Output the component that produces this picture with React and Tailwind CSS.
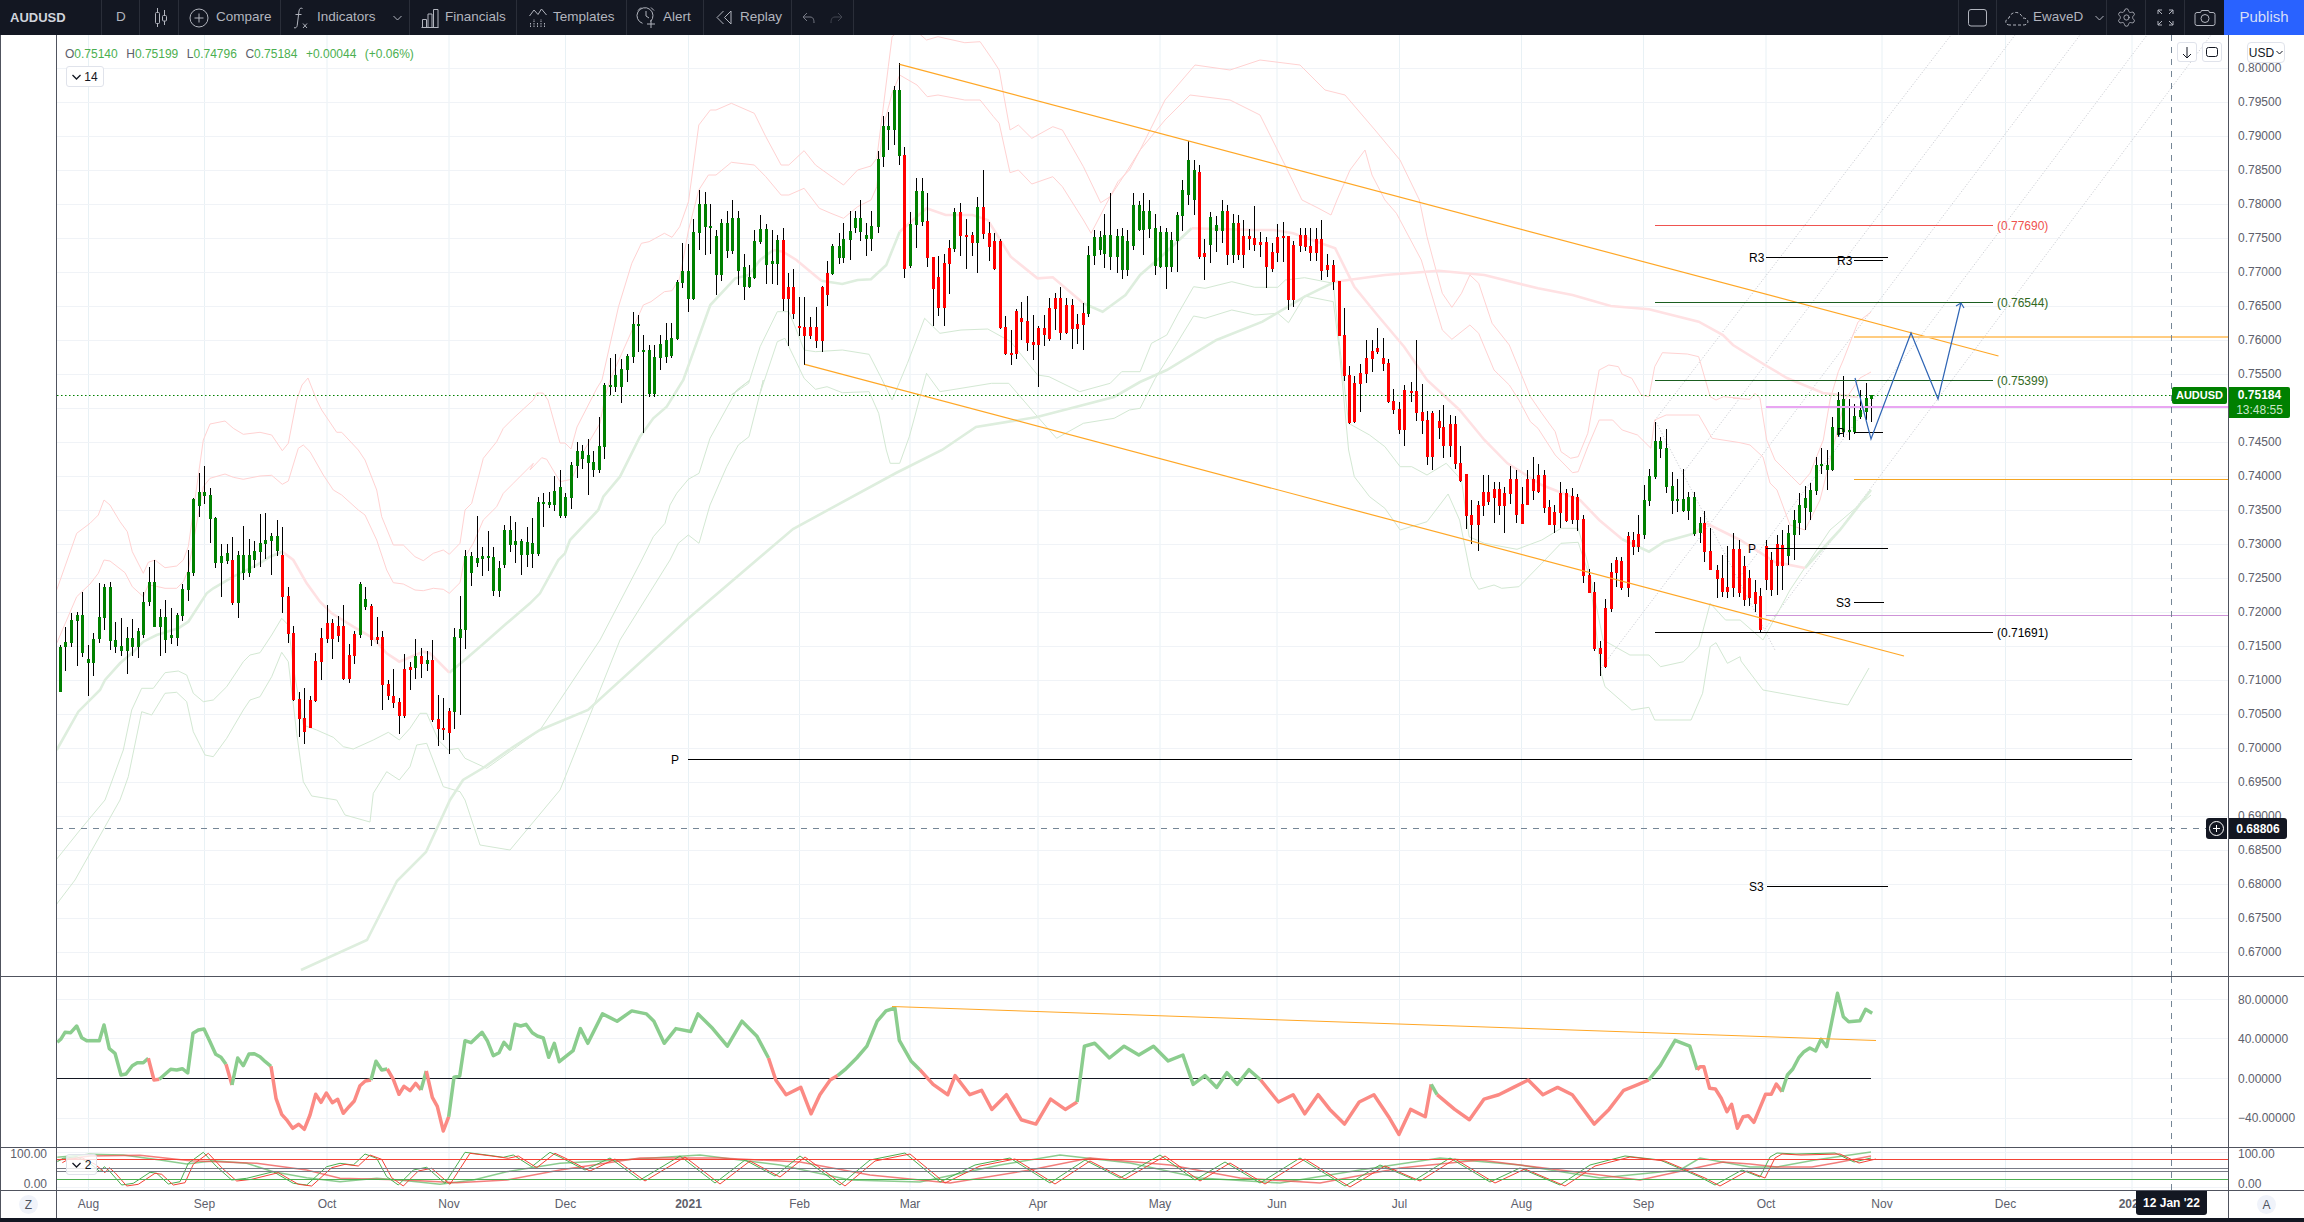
import { Settings } from 'lucide-react';

// chart data was read off the picture, every array is in the pixel space of one crop
const mapPts = (flat, x0 = 0, sx = 1, y0 = 0, sy = 1) => {
  const out = [];
  for (let i = 0; i < flat.length; i += 2) out.push([x0 + flat[i] / sx, y0 + flat[i + 1] / sy]);
  return out;
};
const zA = (f) => mapPts(f, 40, 3, 400, 3);
const zN = (f) => mapPts(f, 530, 3, 380, 3);
const zB = (f) => mapPts(f, 540, 2.613, 30, 3);
const zC = (f) => mapPts(f, 1140, 2.613, 200, 3);
const zD = (f) => mapPts(f, 1700, 3, 360, 3);
const ov = (f) => mapPts(f, 0, 1 / 1.4694, 0, 1 / 1.4694);
const toPath = (pts) => pts.map((p) => p[0].toFixed(1) + ',' + p[1].toFixed(1)).join(' ');

const candlesA = [
  [61,740,875,735,875],[76,727,740,682,812],[94,660,728,640,740],[112,645,662,637,798],[127,645,758,576,770],[145,778,790,735,887],[160,717,790,700,827],[178,652,718,549,730],[193,561,653,552,690],[211,561,722,547,750],
  [226,720,740,666,758],[244,738,752,654,768],[262,714,752,682,822],[277,714,742,657,768],[295,693,742,684,773],[310,607,705,576,714],[328,546,607,501,617],[343,546,680,480,680],[361,652,680,627,768],[376,652,719,600,758],
  [394,705,714,624,732],[412,645,713,640,737],[427,567,647,552,662],[445,516,570,450,602],[460,297,518,293,527],[478,277,317,219,350],[493,277,287,198,311],[511,285,356,264,429],[526,353,488,350,503],[544,468,488,432,591],
  [562,459,483,432,491],[577,480,608,411,614,1],[595,465,608,453,653],[610,465,518,378,539],[628,465,518,417,530],[643,453,480,423,503],[661,429,455,342,500],[676,420,432,339,476],[694,408,423,399,524],[712,408,452,360,467],
  [727,465,590,381,638,1],[745,588,701,561,728,1],[760,699,900,678,902,1],[778,897,956,876,1010,1],[793,954,995,864,1031,1],[811,900,983,888,983,1],[826,783,903,759,905,1],[844,714,785,684,839,1],[862,670,716,615,728,1],[877,670,716,657,776,1],
  [895,678,708,648,725,1],[910,678,836,615,839,1],[928,765,836,732,848,1],[943,702,767,693,791,1],[961,552,705,546,714],[976,597,620,561,629],[994,618,720,612,737,1],[1012,711,719,651,731,1],[1027,711,855,693,929,1],[1045,852,888,840,899,1],
  [1060,888,909,807,923,1],[1078,906,947,894,1001,1],[1093,807,947,762,953,1],[1111,801,809,786,869,1],[1126,768,803,717,836],[1144,768,791,744,833,1],[1162,780,791,753,812],[1177,780,960,720,965,1],[1195,958,986,885,1037,1],[1210,984,989,894,1019,1],
  [1228,933,998,924,1061,1],[1243,711,935,684,986],[1261,687,713,588,944],[1276,468,689,450,746],[1294,468,518,456,557],[1312,474,489,348,501],[1327,468,476,441,527],[1345,468,473,393,512],[1360,471,572,441,587],[1378,504,572,483,590],
  [1393,390,494,375,505],[1411,390,434,348,455],[1426,423,434,366,488],[1444,423,464,417,524],[1462,426,464,381,500],[1477,429,461,354,503],[1495,306,461,291,467],
];
const candlesN = [
  [40,366,369,338,441],[58,366,376,335,384],[73,333,375,288,392],[91,321,408,270,414],[106,351,408,339,414],[124,255,354,246,387],[142,213,258,186,294],[157,213,237,195,267],[175,225,249,177,345],[190,246,270,213,291],[208,198,270,111,279],[223,15,201,10,237],
];
const candlesB = [
  [183,1065,1071,985,1095],[197,1035,1071,972,1085],[212,1017,1071,987,1118],[228,978,1020,972,1056],[242,882,980,846,998],[257,882,888,855,965],[270,960,966,915,1210],[285,960,1092,945,1100],[298,981,1092,945,1100],[314,942,985,915,1020],
  [328,930,980,880,1000],[343,924,978,879,983],[358,756,928,751,931],[372,723,760,640,773],[387,723,807,642,845],[401,605,807,568,810],[416,522,608,480,660],[430,522,590,486,675],[445,588,591,522,672],[461,618,735,600,795],
  [474,579,735,567,752],[489,579,663,543,684],[503,564,663,510,672],[518,564,722,543,765],[533,711,772,672,810],[547,741,772,705,775],[560,633,745,600,747],[576,597,636,555,642],[591,597,705,582,762],[605,693,702,600,762],
  [620,630,702,615,765],[634,630,807,594,843,1],[649,771,807,729,948,1],[662,771,852,717,867,1],[677,888,893,801,918,1],[691,891,918,801,1005,1],[706,891,918,861,927,1],[722,891,933,831,954,1],[736,771,933,768,966,1],[751,730,795,693,828,1],
  [764,648,733,642,736],[780,648,684,609,702],[793,627,684,579,700],[809,603,630,543,690],[822,564,594,543,609],[837,564,605,510,633],[853,615,627,579,678],[866,588,627,543,663],[882,387,591,363,609],[895,288,381,258,411],
  [910,288,300,246,360],[924,180,300,168,345],[939,180,378,100,405],[952,375,717,351,744,1],[967,582,708,546,714],[983,483,585,444,654],[997,483,576,444,588],[1012,573,684,489,711,1],[1026,681,777,681,888,1],[1040,741,834,678,858,1],
  [1055,699,834,672,888,1],[1070,654,702,630,792,1],[1083,546,657,534,666],[1098,546,618,519,678,1],[1113,615,618,567,717,1],[1128,615,639,606,678,1],[1143,531,639,501,729],[1157,531,612,420,627,1],[1172,609,651,576,693,1],[1186,633,718,609,720,1],
  [1201,633,894,627,897,1],[1215,891,972,858,975,1],[1230,969,972,900,1005,1],[1245,843,972,837,987,1],[1258,864,876,816,930,1],[1273,873,939,798,963,1],[1287,936,945,855,990,1],[1302,894,945,888,1071,1],[1316,894,915,855,948,1],[1331,834,927,804,933,1],
  [1345,804,837,789,900,1],[1360,804,909,771,930,1],[1375,825,909,804,912,1],[1389,825,897,807,957,1],[1404,882,897,852,942,1],[1418,849,885,819,960,1],[1432,675,852,648,861],[1447,621,678,600,705],[1462,621,660,603,675],[1475,615,672,552,714],
  [1490,615,681,489,720],[1507,618,681,597,729],[1520,618,720,594,747],[1535,633,720,600,738],[1549,525,648,489,660],[1564,525,600,513,603],
];
const candlesC = [
  [9,33,90,-20,165],[24,33,87,0,114],[38,84,198,42,225],[53,96,201,78,204],[69,96,200,84,267],[82,120,201,96,216],[97,45,123,36,215],[111,-30,48,-60,93],[126,-120,-15,-177,15],[140,-90,0,-120,45],
  [155,-84,171,-105,177,1],[168,159,171,117,240,1],[184,51,135,36,189],[199,75,93,48,156],[213,33,93,0,129],[228,33,165,15,195,1],[242,69,165,42,189],[256,69,165,45,180,1],[270,108,165,60,204,1],[285,108,117,87,150,1],
  [299,114,135,18,153,1],[314,126,135,96,171,1],[330,126,201,111,264,1],[344,156,207,129,216,1],[358,111,159,72,186,1],[373,108,114,66,186,1],[388,108,300,108,330,1],[401,135,300,123,321,1],[417,105,138,84,156,1],[430,105,141,84,153,1],
  [445,138,159,84,183,1],[460,117,159,84,183,1],[474,117,213,60,240,1],[489,195,210,162,231,1],[504,195,246,180,270,1],[519,243,408,243,408,1],[532,405,528,324,543,1],[547,525,669,498,672,1],[560,549,666,528,669,1],[576,519,552,492,636,1],
  [591,474,522,420,549,1],[605,453,477,420,516,1],[620,444,456,384,462,1],[634,474,492,414,513,1],[649,489,606,477,609,1],[662,603,630,567,642,1],[677,627,690,606,702,1],[691,570,690,555,738,1],[707,573,579,546,606,1],[722,573,639,420,663,1],
  [736,636,663,552,702,1],[751,660,771,633,795,1],[764,639,771,633,810,1],[780,663,684,630,717,1],[793,681,738,615,774,1],[809,672,738,645,771,1],[822,672,792,648,807,1],[837,789,843,738,846,1],[853,822,948,822,987,1],[866,945,975,900,1032,1],
  [882,915,975,903,1053,1],[895,876,918,825,948,1],[910,876,906,825,915,1],[924,867,894,846,969,1],[939,867,918,846,945,1],[952,879,918,861,999,1],[967,837,882,798,912,1],[983,837,945,810,969,1],[997,912,972,861,972,1],[1012,837,915,810,915,1],
  [1026,837,873,771,900,1],[1040,825,876,792,879,1],[1055,825,924,810,939,1],[1070,921,975,900,975,1],[1083,936,975,915,999,1],[1098,879,939,846,984,1],[1113,879,964,867,966,1],[1128,888,960,864,972,1],[1143,891,960,882,993,1],[1157,957,1128,945,1150,1],
  [1172,1125,1179,1107,1179,1],[1186,1176,1347,1146,1353,1],[1201,1344,1362,1323,1428,1],[1215,1224,1401,1197,1404,1],[1230,1116,1227,1089,1236,1],[1245,1080,1119,1071,1161,1],[1258,1083,1164,1071,1170,1],[1274,1008,1164,996,1191,1],[1287,1020,1041,996,1065,1],[1302,1002,1041,945,1056,1],
  [1316,900,1005,855,1017],[1331,828,903,807,918],[1345,723,831,666,837],[1360,723,747,711,774],[1375,744,861,687,879],[1389,858,903,816,942],[1404,897,903,837,936],[1418,897,933,807,936],[1432,891,933,876,960],[1447,891,1002,876,1008],
  [1462,969,999,951,1029],[1475,969,1056,933,1086,1],[1490,1053,1110,984,1110,1],[1507,1110,1137,1095,1194,1],[1520,1134,1176,1065,1191,1],[1535,1161,1176,1038,1194,1],[1549,1047,1164,999,1191,1],[1564,1047,1179,1020,1190,1],
];
const candlesEnd = [
  [1744,566,600,556,606,1],[1749,578,598,570,606,1],[1755,592,604,580,612,1],[1760,596,630,588,632,1],[1766,546,580,540,590,1],[1771,560,590,552,596,1],[1777,544,566,535,595,1],[1782,545,566,530,590,1],
  [1788,533,556,525,565],[1794,520,535,510,560],[1799,505,523,493,535],[1805,498,508,486,530],[1810,490,512,483,520],[1816,465,491,457,495],[1821,464,466,448,474],[1827,465,470,450,490],[1832,427,470,417,471],
  [1838,400,435,392,436],[1843,399,432,376,437],[1849,430,432,399,440],[1854,416,432,404,434],[1860,410,417,390,419],[1866,398,412,383,420],[1871,395,399,395,422],
];
const scale = (list, x0, sx, y0, sy) => list.map(([x, t, b, wt, wb, r]) => ({
  x: Math.round(x0 + x / sx), t: y0 + t / sy, b: y0 + b / sy, wt: y0 + wt / sy, wb: y0 + wb / sy, r,
}));
const candles = [
  ...scale(candlesA, 40, 3, 400, 3),
  ...scale(candlesN, 530, 3, 380, 3),
  ...scale(candlesB, 540, 2.613, 30, 3),
  ...scale(candlesC, 1140, 2.613, 200, 3),
  ...scale(candlesEnd, 0, 1, 0, 1),
];

const upperOuter = [
  ...zA([50,570,110,400,150,370,175,345,192,300,210,315,240,365,262,395,277,455,310,520,325,487,345,480,375,503,410,498,430,480,445,440,490,120,510,72,555,63,580,85,610,103,660,97,695,105,727,152,745,130,770,0]),
  [302,385],[308,378],
  ...zA([830,0,845,30,890,97,905,97,955,150,975,180,1010,270,1025,350,1060,435,1090,435,1125,470,1150,482,1180,460,1210,450,1228,463,1260,430,1275,330,1295,310,1330,175,1370,125,1390,85,1420,55,1480,0]),
  [537,393],[543,393],[548,400],[560,443],[565,443],[571,449],[577,427],[597,388],[602,380],
  ...zB([205,830,240,700,265,640,285,635,325,610,345,622,365,590,388,515,415,285,445,240,460,240,500,220,560,250,590,320,630,405,650,405,690,362,720,405,750,430,793,465,830,420,865,408,880,385,895,250,910,110,920,20,960,-20,1010,30,1040,20,1110,38,1150,35,1180,85,1200,120,1228,300,1250,285,1285,325,1340,290,1365,300,1420,410,1465,518,1490,500,1530,430,1568,360]),
  [1165,100],[1195,65],[1230,70],[1260,60],[1300,65],[1325,90],[1345,95],[1375,130],[1400,160],
  ...zC([730,0,750,110,790,280,815,322,840,280,862,225,885,250,920,370,965,435,1020,590,1050,640,1085,695,1100,755,1125,775,1145,770,1170,700,1200,510,1225,495,1250,500,1260,523,1285,535,1310,585,1330,590,1345,500,1365,458,1430,462,1460,470,1490,590,1505,600,1525,590,1568,595]),
  ...zD([100,115,150,118,165,100,180,115,200,240,225,300,270,345,300,375,330,340,370,240,390,120,415,35,430,0]),
  [1858,322],[1871,312],
];
const upperInner = [
  ...zA([50,730,110,590,150,552,175,520,192,480,210,483,255,518,277,560,310,590,325,555,345,558,375,565,410,565,430,545,445,510,490,260,510,235,555,222,580,232,610,238,660,228,695,226,727,253,745,243,775,145,790,135,810,155,850,225,880,270,905,285,955,330,975,345,1010,420,1040,510,1060,548,1090,552,1125,570,1150,572,1180,565,1210,568,1228,580,1260,548,1275,470,1300,430,1330,360,1370,320,1390,280,1420,250,1480,190]),
  ...zN([0,270,35,233,50,238,90,305,125,298,160,215,210,130,225,50,240,0]),
  ...zB([270,825,290,815,325,785,345,782,365,745,388,600,415,480,440,435,460,435,500,397,560,405,590,440,630,495,650,495,690,475,730,535,760,550,793,565,830,530,865,510,880,470,895,300,920,190,940,135,985,165,1012,200,1040,195,1110,210,1150,210,1185,260,1200,280,1228,428,1250,420,1285,462,1340,440,1365,470,1420,570,1440,610,1510,455,1540,420,1568,360]),
  [1165,120],[1190,95],[1230,100],[1260,115],[1285,165],[1302,200],[1318,208],[1331,215],[1337,200],[1350,170],[1365,150],[1372,175],
  ...zC([640,0,670,40,735,180,790,390,815,418,862,375,885,400,925,510,965,555,990,600,1020,665,1040,685,1085,765,1130,818,1145,815,1170,740,1200,660,1235,660,1260,690,1300,705,1335,745,1345,660,1375,645,1460,645,1495,715,1568,728]),
  [1750,445],[1763,457],[1770,483],[1777,490],[1790,525],[1805,530],[1820,500],[1835,440],[1845,400],[1860,378],[1871,372],
];
const lowerInner = [
  [56,860],[80,830],
  ...zA([195,1200,250,1050,275,930,305,865,340,865,375,818,415,813,440,825,460,880,490,905,520,900,560,860,610,785,630,765,660,758,695,705,725,655,745,675,760,800,790,975,830,990,880,1012,910,1040,940,1047,1000,1020,1045,997,1078,1020,1110,985,1140,940,1160,940,1195,1020,1225,1050,1255,1045,1275,1075,1340,1105]),
  [540,730],[600,640],
  ...zN([335,540,370,470,405,430,420,375,440,340,475,298,507,280,540,175,620,30,660,0]),
  ...zB([500,1095,545,1060,575,950,620,845,650,845,670,900,690,960,720,965,790,960,860,973,890,1040,920,1110,960,1000,1005,865,1045,910,1100,900,1170,897,1230,935,1300,1035,1330,1040,1410,1085,1490,1060,1520,1025,1568,1025]),
  ...zC([30,430,70,405,100,340,140,260,170,265,240,245,300,262,360,262,380,240,430,233,505,250,520,420,545,670,600,705,640,740,680,800,710,800,750,825,800,790,840,840,860,1010,900,1030,985,1048,1050,1020,1100,985,1145,985,1170,1090,1210,1320,1280,1365,1330,1365,1360,1400,1420,1385,1460,1340,1490,1210,1530,1260,1568,1260]),
  [1763,640],[1790,590],[1830,530],[1871,495],
];
const lowerOuter = [
  [56,905],[75,880],
  ...zA([240,1200,265,1130,305,935,335,945,375,880,410,877,440,905,460,995,495,1065,520,1070,560,1015,610,930,630,900,660,890,695,830,725,757,745,785,770,1000,790,1145,815,1188,890,1200]),
  [345,815],[370,822],
  ...zA([1000,1180,1040,1115,1078,1140,1110,1100,1130,1035,1160,1030,1210,1160,1260,1175]),
  [465,800],[480,845],[510,850],[560,790],[620,640],
  ...zN([420,540,445,490,475,465,507,490,540,375,590,260,625,195,657,170,690,40,700,0]),
  ...zB([575,1090,620,935,640,925,665,985,690,1045,720,1078,750,1070,790,1088,860,1085,885,1150,905,1260,915,1300,940,1300,965,1220,1010,1030,1045,1085,1100,1075,1180,1060,1225,1060,1300,1160,1350,1225,1420,1180,1500,1165,1540,1140,1568,1135]),
  ...zC([40,535,75,470,140,348,170,355,240,330,300,345,360,340,388,368,430,288,505,305,520,440,545,750,560,830,600,890,640,925,680,990,750,965,805,882,835,960,865,1130,885,1168,925,1155,945,1165,990,1160,1050,1090,1100,1030,1145,1027,1175,1130,1205,1420,1215,1460,1285,1530,1330,1522,1345,1560,1440,1560,1470,1480,1490,1340,1505,1328,1535,1390,1568,1370]),
  [1741,661],[1763,690],[1829,702],[1848,705],[1869,668],
];
// moving averages, split where they change colour
const maPink = [
  zA([727,455,760,480,800,550,840,605,875,640,940,680,1000,715,1040,760,1078,785,1150,755,1170,760,1228,818]),
  zB([610,660,635,665,670,690,735,752]),
  zB([940,605,1010,535,1060,555,1130,555,1170,570,1230,680,1300,745,1340,742,1420,820]),
  zC([135,85,300,90,350,90,400,100,510,145,560,260,620,345,690,440,750,540,835,630,900,720,960,790,1050,855,1150,900,1200,960,1260,1018]),
  [...zC([1450,1000,1480,970,1568,1020]), [1775,562], [1805,568]],
  [...zC([510,245,640,225,780,212,900,225,1040,265,1130,285,1230,318,1330,328,1460,365]), [1723,335], [1733,345], [1765,365], [1787,378], [1823,393], [1858,397]],
];
const maGreen = [
  [...zA([50,1050,115,935,180,870,195,840,240,790,280,755,310,725,350,705,415,685,445,665,500,580,520,565,580,530,650,495,690,470,727,455])],
  [...zA([1228,818,1280,775,1320,740,1400,670,1470,610,1500,580]), ...zN([85,540,105,520,120,480,205,390,220,350,270,290,330,170,370,115,410,80,460,0]), ...zB([445,825,510,745,545,735,575,690,610,660])],
  zB([735,752,790,762,830,750,865,748,905,705,940,605]),
  [...zB([1420,820,1470,845,1530,795,1568,735]), ...zC([60,165,135,85])],
  zC([1260,1018,1330,1055,1370,1025,1450,1000]),
  [[1805,568],[1840,530],[1871,490]],
  [[301,970],[367,940],[397,881],[426,852],[450,800],[463,780],[483,768],[513,747],[540,730],[588,710],[690,617],[793,529],[896,473],[942,450],[976,427],[1037,417],[1114,397],[1140,382],...zC([70,510,200,420,320,365,430,290,510,245])],
];
const gannTops = [
  { x0: 1827, start: [1655, 420] },
  { x0: 1891, start: [1683, 473] },
  { x0: 1956, start: [1601, 668] },
  { x0: 2023, start: [1738, 579] },
  { x0: 2087, start: [1765, 629] },
];

function zA0(f) {
  return mapPts(f, 40, 3, 1000, 3);
}
const rsiSegs = [
  ['g', zA0([52,127,62,118,75,97,92,98,110,78,125,113,140,122,178,122,192,75,208,146,225,160,243,225,258,222,277,197,292,188,310,188,325,175])],
  ['r', zA0([325,175,342,240,358,238])],
  ['g', zA0([358,238,375,223,392,208,410,210,427,206,443,219,459,100,475,90,492,87,510,125,527,163,543,172,558,193])],
  ['r', zA0([558,193,576,255])],
  ['g', zA0([576,255,593,174,610,197,627,162,643,161,660,170,676,185,693,199])],
  ['r', zA0([693,199,708,295,725,343,742,362,758,385,776,373,793,388,810,345,827,283,843,307,859,279,877,308,893,298,910,340,927,320,943,303,960,257,976,243,993,240])],
  ['g', zA0([993,240,1008,184,1025,210,1042,207])],
  ['r', zA0([1042,207,1060,238,1077,283,1092,259,1110,272,1127,250,1143,270])],
  ['g', zA0([1143,270,1159,213])],
  ['r', zA0([1159,213,1177,292,1192,319,1210,393,1226,350])],
  ['g', [...zA0([1226,350,1242,232,1259,228,1275,122,1293,128,1326,97,1342,122,1360,167,1377,158,1392,127,1410,147,1425,73,1442,78,1458,73,1477,98,1492,108,1510,114,1526,172,1543,130,1558,185]),
    ...ov([390,715,395,700,400,710,410,690,420,695,430,688,440,690,445,695,452,710,460,700,470,702,475,690,485,700,495,712,505,695,515,705,523,720])]],
  ['r', ov([523,720,528,735,535,745,545,740,552,758,558,745,565,735,570,732])],
  ['g', ov([570,732,575,728,583,720,590,712,597,695,603,688,609,686,612,708,620,722,626,728])],
  ['r', ov([626,728,635,738,645,745,650,732,660,745,668,742,675,755,685,745,695,762,705,765,715,748,725,755,733,750])],
  ['g', ov([733,750,738,712,745,710,755,720,765,712,775,718,785,712,795,722,805,718,812,738,820,732,828,740,835,730,842,738,850,728,858,735])],
  ['r', ov([858,735,870,750,880,745,888,758,897,745,905,755,915,765,925,750,935,745,945,760,952,772,960,755,970,760,974,738])],
  ['g', ov([974,738,978,745])],
  ['r', ov([978,745,990,755,1000,762,1010,748,1020,745,1030,740,1040,735,1050,745,1060,740,1070,745,1085,765,1095,755,1105,742,1115,738,1122,735])],
  ['g', ov([1122,735,1130,725,1140,708,1150,712,1155,728])],
  ['r', [...ov([1155,728]), ...mapPts([0,290,10,290,25,355,40,357,55,385,70,425,82,403,97,475,112,440,125,437,140,457,155,415,170,373,185,373,198,342,213,365], 1700, 2.596, 970, 3)]],
  ['g', mapPts([213,365,227,315,241,297,257,262,270,245,285,234,300,243,314,208,329,230,343,150,357,70,372,140,386,155,415,152,430,118,447,130], 1700, 2.596, 970, 3)],
];
const stochFast = [
  ...zA0([52,485,70,475,110,470,150,490,180,515,193,500,210,515,245,555,280,550,330,517,350,520,385,552,420,545,445,490,490,457,530,500,575,540,620,535,700,515,760,550,800,555,860,500,900,490,940,495,975,462,1010,475,1040,530,1075,555,1120,510,1160,502,1215,550,1275,457,1340,465,1390,472,1420,465,1475,500,1530,457]),
  [560,1157],[585,1170],[610,1158],[640,1180],[680,1156],[715,1183],[745,1160],[775,1176],[800,1156],[840,1185],[870,1160],[905,1153],[940,1182],[975,1165],[1010,1158],[1050,1183],[1085,1160],[1120,1178],[1160,1155],[1195,1180],[1225,1162],[1260,1183],[1300,1158],[1345,1186],[1380,1165],[1415,1180],[1450,1158],[1490,1182],[1520,1168],[1560,1185],[1590,1165],[1625,1156],[1660,1160],[1700,1177],[1715,1185],[1742,1170],[1760,1177],[1770,1157],[1777,1153],[1796,1154],[1835,1153],[1854,1162],[1871,1158],
];
const stochSlowG = [
  ...zA0([52,472,150,463,250,465,360,480,440,492,520,482,620,490,700,515,800,533,900,545,1010,535,1100,542,1200,553,1300,540,1400,515,1560,490]),
  [620,1160],[700,1155],[780,1165],[850,1180],[920,1182],[1000,1165],[1060,1155],[1130,1163],[1200,1178],[1280,1183],[1360,1170],[1440,1158],[1520,1165],[1600,1178],[1680,1170],[1700,1158],[1750,1167],[1777,1167],[1815,1160],[1871,1152],
];
const stochSlowR = [
  ...zA0([52,480,150,468,300,466,450,482,650,490,800,510,900,535,1100,540,1250,548,1400,540,1560,510]),
  [640,1158],[720,1158],[800,1162],[870,1175],[950,1183],[1030,1170],[1090,1158],[1170,1165],[1240,1178],[1320,1183],[1400,1168],[1480,1160],[1560,1170],[1640,1180],[1700,1167],[1723,1162],[1750,1164],[1777,1167],[1812,1167],[1835,1163],[1871,1156],
];

const prices = [];
for (let i = 0; i <= 26; i++) prices.push((0.8 - i * 0.005).toFixed(5));
const priceY = (i) => 68.3 + i * 34;
const monthX = [88.5, 204.5, 327, 449, 565.5, 688.5, 799.5, 910, 1038, 1160, 1277, 1399.5, 1521.5, 1643.5, 1766, 1882, 2005.5, 2132];
const timeLabels = [
  [88.5,'Aug'],[204.5,'Sep'],[327,'Oct'],[449,'Nov'],[565.5,'Dec'],[688.5,'2021',1],[799.5,'Feb'],[910,'Mar'],[1038,'Apr'],[1160,'May'],[1277,'Jun'],[1399.5,'Jul'],[1521.5,'Aug'],[1643.5,'Sep'],[1766,'Oct'],[1882,'Nov'],[2005.5,'Dec'],[2132,'2022',1],
];

const levels = [
  { y: 225.5, x1: 1655, x2: 1993, c: '#ef5350', label: '(0.77690)', tc: '#ef5350' },
  { y: 302.5, x1: 1655, x2: 1993, c: '#1b5e20', label: '(0.76544)', tc: '#33691e' },
  { y: 380.5, x1: 1655, x2: 1993, c: '#1b5e20', label: '(0.75399)', tc: '#33691e' },
  { y: 632.5, x1: 1655, x2: 1993, c: '#000000', label: '(0.71691)', tc: '#000000' },
];
const pivots = [
  { y: 257.5, x1: 1766, x2: 1888, label: 'R3', lx: 1749 },
  { y: 260.5, x1: 1854, x2: 1883, label: 'R3', lx: 1837 },
  { y: 432.5, x1: 1854, x2: 1883, label: 'P', lx: 1837 },
  { y: 548.5, x1: 1766, x2: 1888, label: 'P', lx: 1748 },
  { y: 602.5, x1: 1854, x2: 1884, label: 'S3', lx: 1836 },
  { y: 759.5, x1: 688, x2: 2132, label: 'P', lx: 671 },
  { y: 886.5, x1: 1767, x2: 1888, label: 'S3', lx: 1749 },
];

function MainChart() {
  return (
    <svg width="2171" height="941" viewBox="57 35 2171 941" className="block font-['Liberation_Sans',sans-serif]">
      {monthX.map((x) => <line key={x} x1={x} x2={x} y1="35" y2="976" stroke="#e8f1f5" />)}
      {prices.map((p, i) => <line key={p} x1="57" x2="2228" y1={Math.round(priceY(i)) + 0.5} y2={Math.round(priceY(i)) + 0.5} stroke="#f0f3f7" />)}

      {gannTops.map((g) => (
        <line key={g.x0} x1={g.start[0]} y1={g.start[1]} x2={g.x0 + 165 / 1.33} y2="35" stroke="#c3c5cc" strokeDasharray="1 2" />
      ))}
      <line x1="1655" y1="420" x2="1775" y2="650" stroke="#c3c5cc" strokeDasharray="1 2" />

      <polyline points={toPath(upperOuter)} fill="none" stroke="#ffd2d2" />
      <polyline points={toPath(upperInner)} fill="none" stroke="#ffd2d2" />
      <polyline points={toPath(lowerInner)} fill="none" stroke="#d3e8d3" />
      <polyline points={toPath(lowerOuter)} fill="none" stroke="#d3e8d3" />
      {maGreen.map((s, i) => <polyline key={i} points={toPath(s)} fill="none" stroke="#deeede" strokeWidth="2.6" />)}
      {maPink.map((s, i) => <polyline key={i} points={toPath(s)} fill="none" stroke="#ffe1e3" strokeWidth="2.6" />)}

      <line x1="57" x2="2228" y1="395.5" y2="395.5" stroke="#008000" strokeDasharray="1.5 2.5" />

      <g shapeRendering="crispEdges">
        {candles.map((c, i) => (
          <g key={i}>
            <rect x={c.x} y={c.wt} width="1" height={c.wb - c.wt} fill="#000000" />
            <rect x={c.x - 1} y={c.t} width="3" height={Math.max(c.b - c.t, 2)} fill={c.r ? '#ff0000' : '#008000'} />
          </g>
        ))}
      </g>

      <line x1="899.7" y1="64.3" x2="1998.5" y2="356" stroke="#ffa726" strokeWidth="1.2" />
      <line x1="804.8" y1="364.3" x2="1904" y2="656" stroke="#ffa726" strokeWidth="1.2" />

      {levels.map((l) => (
        <g key={l.label}>
          <line x1={l.x1} x2={l.x2} y1={l.y} y2={l.y} stroke={l.c} />
          <text x="1997" y={l.y + 4} fontSize="12" fill={l.tc}>{l.label}</text>
        </g>
      ))}
      {pivots.map((l) => (
        <g key={l.y}>
          <line x1={l.x1} x2={l.x2} y1={l.y} y2={l.y} stroke="#000000" />
          <text x={l.lx} y={l.y + 4} fontSize="12" fill="#000000">{l.label}</text>
        </g>
      ))}
      <line x1="1854" x2="2228" y1="337" y2="337" stroke="#ffcc80" strokeWidth="2" />
      <line x1="1854" x2="2228" y1="479.5" y2="479.5" stroke="#f5a623" />
      <line x1="1766" x2="2228" y1="407" y2="407" stroke="#e9a6f2" strokeWidth="2" />
      <line x1="1766" x2="2228" y1="615.5" y2="615.5" stroke="#ce93d8" />

      <polyline points="1855,378 1871,439 1911,333 1938,399 1961,303" fill="none" stroke="#2f65b5" strokeWidth="1.2" />
      <polyline points="1956,306 1961,303 1964,308" fill="none" stroke="#2f65b5" strokeWidth="1.2" />

      <line x1="57" x2="2228" y1="828.5" y2="828.5" stroke="#758696" strokeDasharray="6 6" />
      <line x1="2171.5" x2="2171.5" y1="35" y2="976" stroke="#758696" strokeDasharray="6 6" />
    </svg>
  );
}

function RsiChart() {
  const ys = [999.5, 1038.5, 1078.5, 1118.5];
  return (
    <svg width="2171" height="170" viewBox="57 977 2171 170" className="block">
      {monthX.map((x) => <line key={x} x1={x} x2={x} y1="977" y2="1147" stroke="#e8f1f5" />)}
      {ys.map((y) => <line key={y} x1="57" x2="2228" y1={y} y2={y} stroke="#f0f3f7" />)}
      <line x1="57" x2="1871" y1="1078.5" y2="1078.5" stroke="#131722" />
      {rsiSegs.map(([c, pts], i) => (
        <polyline key={i} points={toPath(pts)} fill="none" strokeLinejoin="round" stroke={c === 'g' ? '#8bcd8e' : '#fb8a84'} strokeWidth="3.5" />
      ))}
      <line x1="892" y1="1006.5" x2="1876" y2="1040.5" stroke="#ffa726" />
      <line x1="2171.5" x2="2171.5" y1="977" y2="1147" stroke="#758696" strokeDasharray="6 6" />
    </svg>
  );
}

function StochChart() {
  return (
    <svg width="2171" height="42" viewBox="57 1148 2171 42" className="block">
      {monthX.map((x) => <line key={x} x1={x} x2={x} y1="1148" y2="1190" stroke="#e8f1f5" />)}
      <line x1="57" x2="2228" y1="1152.5" y2="1152.5" stroke="#f0f3f7" />
      <line x1="57" x2="2228" y1="1187.5" y2="1187.5" stroke="#f0f3f7" />
      <polyline points={toPath(stochSlowG)} fill="none" stroke="#66bb6a" strokeOpacity="0.75" strokeWidth="1.5" />
      <polyline points={toPath(stochSlowR)} fill="none" stroke="#ef5350" strokeOpacity="0.75" strokeWidth="1.5" />
      <polyline points={toPath(stochFast)} fill="none" stroke="#4caf50" />
      <polyline points={toPath(stochFast.map(([x, y]) => [x + 5, y + 1]))} fill="none" stroke="#f44336" />
      <line x1="57" x2="2228" y1="1159.5" y2="1159.5" stroke="#f44336" />
      <line x1="57" x2="2228" y1="1168.5" y2="1168.5" stroke="#787b86" />
      <line x1="57" x2="2228" y1="1171.5" y2="1171.5" stroke="#787b86" />
      <line x1="57" x2="2228" y1="1179.5" y2="1179.5" stroke="#4caf50" />
      <line x1="2171.5" x2="2171.5" y1="1148" y2="1190" stroke="#758696" strokeDasharray="6 6" />
    </svg>
  );
}

const Icon = ({ w, h, children }) => (
  <svg width={w} height={h} viewBox={`0 0 ${w} ${h}`} fill="none" stroke="#b2b5be" strokeWidth="1">{children}</svg>
);

function Section({ className = '', children }) {
  return <div className={`flex h-full shrink-0 items-center border-r border-[#2a2e39] ${className}`}>{children}</div>;
}

function Toolbar() {
  return (
    <div className="flex h-[35px] shrink-0 items-center bg-[#131722] text-[13.5px] text-[#b2b5be]">
      <Section className="w-[102px] pl-[10px] text-[13px] font-bold text-[#d1d4dc]">AUDUSD</Section>
      <Section className="w-[38px] pl-[14px]">D</Section>
      <Section className="w-[39px] pl-[14px]">
        <Icon w="14" h="21">
          <path d="M3.5 1v4M3.5 17v3M10.5 3v5M10.5 14v4" />
          <rect x="1.5" y="5.5" width="4" height="11" rx="1" />
          <rect x="8.5" y="8.5" width="4" height="5.5" rx="1" />
        </Icon>
      </Section>
      <Section className="w-[102px] gap-[7px] pl-[10px]">
        <Icon w="20" h="20">
          <circle cx="10" cy="10" r="9" />
          <path d="M10 5.5v9M5.5 10h9" />
        </Icon>
        Compare
      </Section>
      <Section className="w-[129px] gap-[9px] pl-[12px]">
        <Icon w="15" h="24">
          <path d="M9.5 2.5C7.5 1.5 6.5 2.5 6 5L4.2 19.5c-.4 2-1.5 2.8-3.2 2.2M2.5 8.5h6M10 17.5l4 4.5M14 17.5l-4 4.5" />
        </Icon>
        Indicators
        <svg width="9" height="6" viewBox="0 0 9 6" fill="none" stroke="#b2b5be" className="ml-[8px]"><path d="M.5 1l4 4 4-4" /></svg>
      </Section>
      <Section className="w-[107px] gap-[6px] pl-[11px]">
        <Icon w="18" h="20">
          <path d="M.5 19.5h17M1.5 19.5v-8h4v8M7 19.5V6h4v13.5M12.5 19.5V1.5H17v18" />
        </Icon>
        Financials
      </Section>
      <Section className="w-[110px] gap-[6px] pl-[12px]">
        <Icon w="18" h="21">
          <path d="M.5 9L5 3l4 4.5L12.5 2l5 6" />
          <path d="M1.5 20v-5M5 20v-8M8.5 20v-5M12 20v-8M15.5 20v-5" strokeDasharray="1.5 1" />
        </Icon>
        Templates
      </Section>
      <Section className="w-[77px] gap-[7px] pl-[9px]">
        <Icon w="20" h="23">
          <path d="M14.5 15.5a8 8 0 1 0-8 1.8" />
          <path d="M2 4.5L5 1.5M18 4.5L15 1.5M10 5v5l3 2M15 14v8M11 18h8" />
        </Icon>
        Alert
      </Section>
      <Section className="w-[88px] gap-[8px] pl-[12px]">
        <Icon w="16" h="15">
          <path d="M7.5 1L1 7.5 7.5 14M15 1L8.5 7.5 15 14V1z" />
        </Icon>
        Replay
      </Section>
      <Section className="w-[62px] gap-[15px] pl-[10px]">
        <svg width="13" height="12" viewBox="0 0 13 12" fill="none" stroke="#787b86"><path d="M5 1L1 5l4 4M1 5h7c3 0 4 2 4 6" /></svg>
        <svg width="13" height="12" viewBox="0 0 13 12" fill="none" stroke="#434651"><path d="M8 1l4 4-4 4M12 5H5C2 5 1 7 1 11" /></svg>
      </Section>
      <div className="flex-1" />
      <Section className="w-[39px] justify-center border-l">
        <Icon w="19" h="18"><rect x=".5" y=".5" width="18" height="16.5" rx="2.5" /></Icon>
      </Section>
      <Section className="w-[110px] gap-[4px] pl-[8px] text-[#b2b5be]">
        <Icon w="24" h="16">
          <path d="M5 15c-6 0-5-6-1-7 1-5 8-8 12-3 1 1 1 2 2 3 6 0 7 7 0 7H5z" strokeDasharray="3 2" />
        </Icon>
        EwaveD
        <svg width="9" height="6" viewBox="0 0 9 6" fill="none" stroke="#b2b5be" className="ml-[8px]"><path d="M.5 1l4 4 4-4" /></svg>
      </Section>
      <Section className="w-[39px] justify-center">
        <Settings size={21} strokeWidth={1} color="#b2b5be" />
      </Section>
      <Section className="w-[39px] justify-center">
        <Icon w="17" h="17">
          <path d="M1 5V1h4M16 5V1h-4M1 12v4h4M16 12v4h-4M1 1l4 4M16 1l-4 4M1 16l4-4M16 16l-4-4" />
        </Icon>
      </Section>
      <div className="flex h-full w-[39px] shrink-0 items-center justify-center">
        <Icon w="22" h="16">
          <path d="M1 4.5a2 2 0 0 1 2-2h3.500l1-2h7l1 2H19a2 2 0 0 1 2 2v9a2 2 0 0 1-2 2H3a2 2 0 0 1-2-2z" />
          <circle cx="11" cy="8.5" r="4" />
        </Icon>
      </div>
      <div className="flex h-full w-[80px] shrink-0 items-center justify-center bg-[#2962ff] text-[15px] text-[#d6def7]">Publish</div>
    </div>
  );
}

function Legend() {
  const items = [['O', '0.75140'], ['H', '0.75199'], ['L', '0.74796'], ['C', '0.75184']];
  return (
    <div className="absolute left-[8px] top-[12px] flex flex-col items-start text-[12px] text-[#4caf50]">
      <div className="flex h-[14px] items-center gap-[8.5px] whitespace-nowrap">
        {items.map(([k, v]) => (
          <span key={k}><span className="text-[#5d606b]">{k}</span>{v}</span>
        ))}
        <span>+0.00044</span>
        <span>(+0.06%)</span>
      </div>
      <div className="ml-[1px] mt-[5px] flex h-[21px] w-[38px] items-center justify-center gap-[3px] rounded-[3px] border border-[#e0e3eb] bg-white text-[#131722]">
        <svg width="9" height="6" viewBox="0 0 9 6" fill="none" stroke="#131722" strokeWidth="1.3"><path d="M.5 1l4 4 4-4" /></svg>
        14
      </div>
    </div>
  );
}

export default function App() {
  return (
    <div className="flex h-[1222px] w-[2304px] flex-col overflow-hidden bg-white font-['Liberation_Sans',sans-serif] text-[12px] text-[#5d606b]">
      <Toolbar />

      {/* main pane */}
      <div className="flex h-[942px] shrink-0 border-b border-[#50535e]">
        <div className="w-[57px] shrink-0 border-x border-[#50535e]" />
        <div className="relative w-[2171px] shrink-0 overflow-hidden">
          <MainChart />
          <Legend />
          <div className="absolute left-[2120px] top-[7px] flex gap-[5px]">
            <div className="flex h-[20px] w-[20px] items-center justify-center rounded-[3px] border border-[#e0e3eb] bg-white">
              <svg width="10" height="13" viewBox="0 0 10 13" fill="none" stroke="#131722"><path d="M5 1v11M1 8l4 4 4-4" /></svg>
            </div>
            <div className="flex h-[20px] w-[20px] items-center justify-center rounded-[3px] border border-[#e0e3eb] bg-white">
              <svg width="12" height="12" viewBox="0 0 12 12" fill="none" stroke="#131722"><rect x=".5" y="1.5" width="11" height="9" rx="2" /></svg>
            </div>
          </div>
          {/* symbol tag on the last price */}
          <div className="absolute left-[2115px] top-[352px] flex h-[17px] w-[55px] items-center justify-center rounded-[2px] bg-[#008000] text-[11px] font-bold text-white">AUDUSD</div>
          <div className="absolute left-[2149px] top-[783px] flex h-[21px] w-[21px] items-center justify-center rounded-l-[3px] bg-[#131722]">
            <svg width="15" height="15" viewBox="0 0 15 15" fill="none" stroke="#ffffff"><circle cx="7.5" cy="7.5" r="7" /><path d="M7.5 4v7M4 7.5h7" /></svg>
          </div>
        </div>
        <div className="relative flex-1 overflow-hidden border-l border-[#50535e] pl-[9px] pt-[16px]">
          <div className="flex flex-col">
            {prices.map((p) => <div key={p} className="flex h-[34px] items-center">{p}</div>)}
          </div>
          <div className="absolute left-[18px] top-[7px] flex h-[21px] w-[38px] items-center justify-center gap-[2px] rounded-[4px] border border-[#e0e3eb] bg-white text-[#131722]">
            USD
            <svg width="7" height="5" viewBox="0 0 7 5" fill="none" stroke="#131722"><path d="M.5 1l3 3 3-3" /></svg>
          </div>
          <div className="absolute left-0 top-[352px] flex h-[31px] w-[61px] flex-col items-center justify-center rounded-r-[2px] bg-[#008000] text-[12px] leading-[15px]">
            <span className="font-bold text-white">0.75184</span>
            <span className="text-[#c8e6c9]">13:48:55</span>
          </div>
          <div className="absolute left-0 top-[783px] flex h-[21px] w-[58px] items-center justify-center rounded-r-[3px] bg-[#131722] font-bold text-white">0.68806</div>
        </div>
      </div>

      {/* oscillator pane */}
      <div className="flex h-[171px] shrink-0 border-b border-[#50535e]">
        <div className="w-[57px] shrink-0 border-x border-[#50535e]" />
        <div className="w-[2171px] shrink-0 overflow-hidden"><RsiChart /></div>
        <div className="flex flex-1 flex-col border-l border-[#50535e] pl-[9px] pt-[3px]">
          {['80.00000', '40.00000', '0.00000', '−40.00000'].map((t) => (
            <div key={t} className="flex h-[39.5px] items-center">{t}</div>
          ))}
        </div>
      </div>

      {/* stochastic pane */}
      <div className="flex h-[43px] shrink-0 border-b border-[#50535e]">
        <div className="flex w-[57px] shrink-0 flex-col items-end justify-between overflow-hidden border-x border-[#50535e] pr-[9px] leading-[12px]">
          <span>100.00</span>
          <span>0.00</span>
        </div>
        <div className="relative w-[2171px] shrink-0 overflow-hidden">
          <StochChart />
          <div className="absolute left-[9px] top-[6px] flex h-[21px] w-[31px] items-center justify-center gap-[4px] rounded-[3px] border border-[#e0e3eb] bg-white/80 text-[#131722]">
            <svg width="9" height="6" viewBox="0 0 9 6" fill="none" stroke="#131722" strokeWidth="1.3"><path d="M.5 1l4 4 4-4" /></svg>
            2
          </div>
        </div>
        <div className="flex flex-1 flex-col justify-between overflow-hidden border-l border-[#50535e] pl-[9px] leading-[12px]">
          <span>100.00</span>
          <span>0.00</span>
        </div>
      </div>

      {/* time axis */}
      <div className="flex h-[27px] shrink-0">
        <div className="flex w-[57px] shrink-0 items-center justify-center border-x border-[#50535e]">
          <div className="flex h-[19px] w-[19px] items-center justify-center rounded-full bg-[#f0f3fa] text-[#50535e]">Z</div>
        </div>
        <div className="relative w-[2171px] shrink-0 overflow-hidden">
          <svg width="2171" height="27" viewBox="57 1191 2171 27" className="block">
            {timeLabels.map(([x, t, strong]) => (
              <text key={x} x={x} y="1208" textAnchor="middle" fontSize="12" fill="#5d606b" fontWeight={strong ? 700 : 400} fontFamily="Liberation Sans, sans-serif">{t}</text>
            ))}
          </svg>
          <div className="absolute left-[2079px] top-0 flex h-[24px] w-[71px] items-center justify-center rounded-b-[3px] bg-[#131722] font-bold text-white">12 Jan '22</div>
        </div>
        <div className="flex flex-1 items-center justify-center border-l border-[#50535e]">
          <div className="flex h-[19px] w-[19px] items-center justify-center rounded-full bg-[#f0f3fa] text-[#50535e]">A</div>
        </div>
      </div>

      <div className="h-[4px] shrink-0 bg-[#131722]" />
    </div>
  );
}
